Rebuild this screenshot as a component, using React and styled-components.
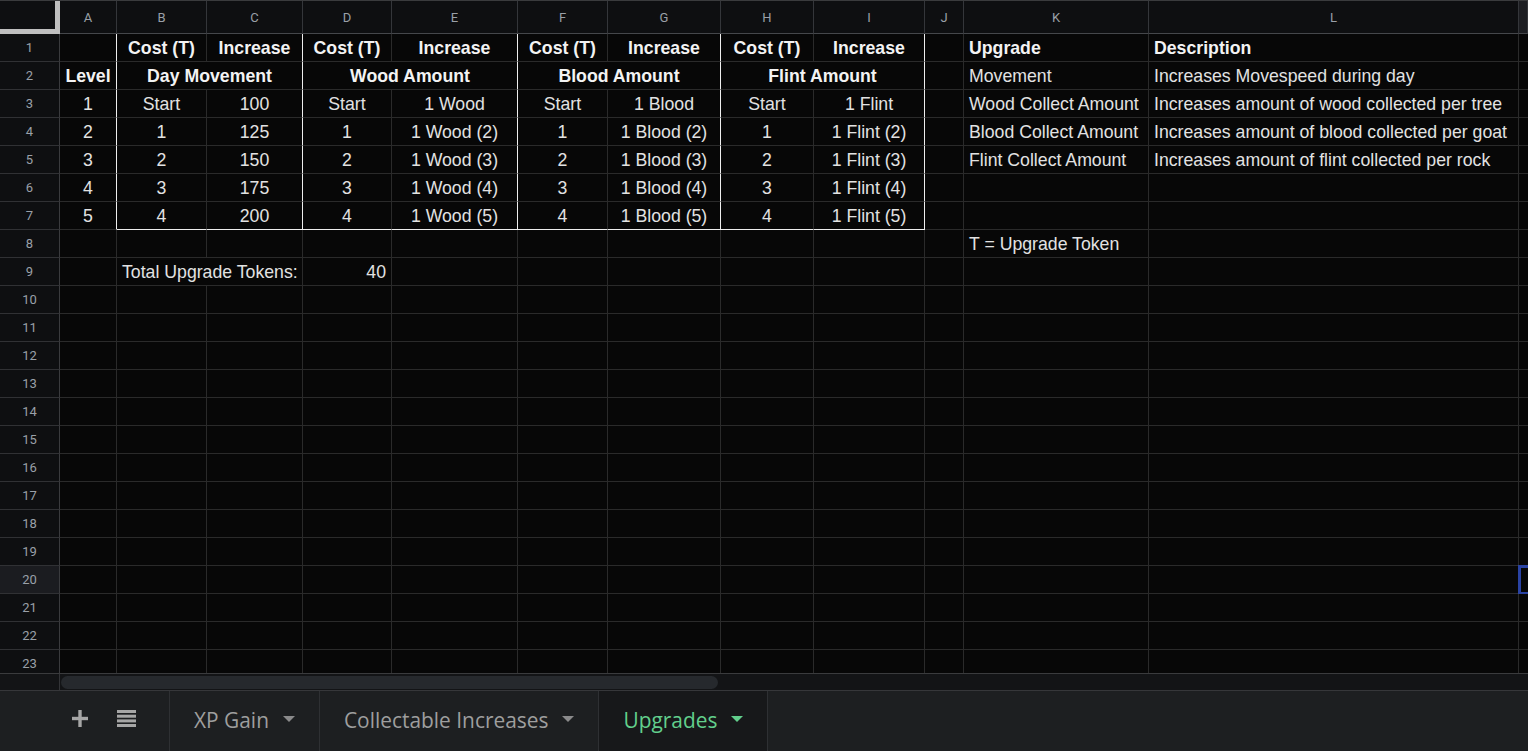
import React from "react";
import styled, { createGlobalStyle, css } from "styled-components";

const GlobalStyle = createGlobalStyle`
  html, body {
    margin: 0;
    padding: 0;
    background: #070707;
    overflow: hidden;
  }
  * {
    box-sizing: border-box;
  }
`;

const COLS =
  "60px 57px 90px 96px 89px 126px 90px 113px 93px 111px 39px 185px 370px 1fr";

const LETTERS = ["A", "B", "C", "D", "E", "F", "G", "H", "I", "J", "K", "L", "M"];
const BOXED_RIGHT = [0, 2, 4, 6, 8];
const ROW_COUNT = 23;
const SELECTED = { row: 20, col: 12 };

const Sheet = styled.div`
  display: flex;
  flex-direction: column;
  height: 100vh;
  width: 100vw;
  font-family: "Liberation Sans", Arial, sans-serif;
`;

const ColumnHeader = styled.div`
  display: grid;
  grid-template-columns: ${COLS};
  height: 34px;
  flex-shrink: 0;
  border-top: 1px solid #3a3b3d;
  background: #0e0f11;
`;

const Corner = styled.div`
  border-right: 5px solid #bfbfbf;
  border-bottom: 5px solid #bfbfbf;
  background: #0e0f11;
`;

const HeaderCell = styled.div`
  display: flex;
  align-items: center;
  justify-content: center;
  background: ${(p) => (p.$active ? "#1d1e22" : "#0e0f11")};
  border-right: 1px solid #34363a;
  border-bottom: 1px solid #45474b;
  color: #9aa0a8;
  font-family: Roboto, "Liberation Sans", sans-serif;
  font-size: 13px;
`;

const Body = styled.div`
  flex: 1;
  overflow: hidden;
  display: grid;
  grid-template-columns: ${COLS};
  grid-auto-rows: 28px;
  align-content: start;
`;

const RowHeader = styled.div`
  display: flex;
  align-items: center;
  justify-content: center;
  background: ${(p) => (p.$active ? "#1b1c20" : "#0e0f11")};
  border-right: 1px solid #3a3b3e;
  border-bottom: 1px solid #303134;
  color: #9aa0a8;
  font-family: Roboto, "Liberation Sans", sans-serif;
  font-size: 13px;
`;

const Cell = styled.div`
  grid-column: span ${(p) => p.$span};
  display: flex;
  align-items: center;
  justify-content: ${(p) =>
    p.$align === "left" ? "flex-start" : p.$align === "right" ? "flex-end" : "center"};
  padding: 1px 5px 0;
  background: #070707;
  border-right: 1px solid ${(p) => (p.$edgeRight ? "#ededed" : "#2a2a2a")};
  border-bottom: 1px solid ${(p) => (p.$edgeBottom ? "#ededed" : "#2a2a2a")};
  color: ${(p) => (p.$bold ? "#f3f3f3" : "#e2e2e2")};
  font-weight: ${(p) => (p.$bold ? 700 : 400)};
  font-size: 17.7px;
  white-space: nowrap;
  ${(p) =>
    p.$selected &&
    css`
      outline: 3px solid #2a43a3;
      outline-offset: -2px;
    `}
`;

const ScrollRow = styled.div`
  display: flex;
  height: 17px;
  flex-shrink: 0;
  border-top: 1px solid #3a3b3d;
  background: #131416;
`;

const ScrollCorner = styled.div`
  width: 60px;
  border-right: 1px solid #333437;
`;

const ScrollThumb = styled.div`
  margin: 2px 0 0 1px;
  width: 657px;
  height: 13px;
  border-radius: 7px;
  background: #26292d;
`;

const TabBar = styled.div`
  display: flex;
  height: 61px;
  flex-shrink: 0;
  border-top: 1px solid #36373a;
  background: #1d1f21;
`;

const Tools = styled.div`
  width: 170px;
  display: flex;
  align-items: center;
  gap: 29px;
  padding: 0 0 6px 72px;
  border-right: 1px solid #2e3033;
  color: #a6a6a6;
`;

const Tab = styled.div`
  display: flex;
  align-items: center;
  gap: 14px;
  padding: 0 24px 3px;
  border-right: 1px solid #2e3033;
  background: ${(p) => (p.$active ? "#17181a" : "transparent")};
  color: ${(p) => (p.$active ? "#62cf8c" : "#9e9e9e")};
  font-family: "Open Sans", "Liberation Sans", sans-serif;
  font-size: 20.9px;
`;

const Caret = styled.span`
  width: 0;
  height: 0;
  margin-top: -2px;
  border-left: 6px solid transparent;
  border-right: 6px solid transparent;
  border-top: 6px solid currentColor;
  opacity: ${(p) => (p.$active ? 1 : 0.85)};
`;

const mid = (t) => ({ t });
const bold = (t, span = 1) => ({ t, bold: true, span });
const left = (t, isBold = false) => ({ t, align: "left", bold: isBold });
const blank = () => ({ t: "" });

const DATA = {
  1: [blank(), bold("Cost (T)"), bold("Increase"), bold("Cost (T)"), bold("Increase"), bold("Cost (T)"), bold("Increase"), bold("Cost (T)"), bold("Increase"), blank(), left("Upgrade", true), left("Description", true)],
  2: [bold("Level"), bold("Day Movement", 2), bold("Wood Amount", 2), bold("Blood Amount", 2), bold("Flint Amount", 2), blank(), left("Movement"), left("Increases Movespeed during day")],
  3: [mid("1"), mid("Start"), mid("100"), mid("Start"), mid("1 Wood"), mid("Start"), mid("1 Blood"), mid("Start"), mid("1 Flint"), blank(), left("Wood Collect Amount"), left("Increases amount of wood collected per tree")],
  4: [mid("2"), mid("1"), mid("125"), mid("1"), mid("1 Wood (2)"), mid("1"), mid("1 Blood (2)"), mid("1"), mid("1 Flint (2)"), blank(), left("Blood Collect Amount"), left("Increases amount of blood collected per goat")],
  5: [mid("3"), mid("2"), mid("150"), mid("2"), mid("1 Wood (3)"), mid("2"), mid("1 Blood (3)"), mid("2"), mid("1 Flint (3)"), blank(), left("Flint Collect Amount"), left("Increases amount of flint collected per rock")],
  6: [mid("4"), mid("3"), mid("175"), mid("3"), mid("1 Wood (4)"), mid("3"), mid("1 Blood (4)"), mid("3"), mid("1 Flint (4)")],
  7: [mid("5"), mid("4"), mid("200"), mid("4"), mid("1 Wood (5)"), mid("4"), mid("1 Blood (5)"), mid("4"), mid("1 Flint (5)")],
  8: [blank(), blank(), blank(), blank(), blank(), blank(), blank(), blank(), blank(), blank(), left("T = Upgrade Token")],
  9: [blank(), { t: "Total Upgrade Tokens:", align: "left", span: 2 }, { t: "40", align: "right" }],
};

const TABS = [
  { name: "XP Gain" },
  { name: "Collectable Increases" },
  { name: "Upgrades", active: true },
];

const PlusIcon = () => (
  <svg width="16" height="17" viewBox="0 0 16 17">
    <rect x="6.3" y="0" width="3.4" height="17" fill="currentColor" />
    <rect x="0" y="6.8" width="16" height="3.4" fill="currentColor" />
  </svg>
);

const ListIcon = () => (
  <svg width="19" height="17" viewBox="0 0 19 17">
    {[0, 4.7, 9.4, 14].map((y) => (
      <rect key={y} x="0" y={y} width="19" height="3" fill="currentColor" />
    ))}
  </svg>
);

const renderRow = (r) => {
  const cells = DATA[r] || [];
  const out = [];
  let col = 0;
  let i = 0;
  while (col < LETTERS.length) {
    const cell = cells[i] || blank();
    const span = cell.span || 1;
    const lastCol = col + span - 1;
    out.push(
      <Cell
        key={`${r}-${col}`}
        $span={span}
        $align={cell.align}
        $bold={cell.bold}
        $edgeRight={r <= 7 && BOXED_RIGHT.includes(lastCol)}
        $edgeBottom={r === 7 && col >= 1 && col <= 8}
        $selected={r === SELECTED.row && col === SELECTED.col}
      >
        {cell.t}
      </Cell>
    );
    col += span;
    i += 1;
  }
  return out;
};

const App = () => {
  const rowNumbers = Array.from({ length: ROW_COUNT }, (_, i) => i + 1);

  return (
    <>
      <GlobalStyle />
      <Sheet>
        <ColumnHeader>
          <Corner />
          {LETTERS.map((letter, idx) => (
            <HeaderCell key={letter} $active={idx === SELECTED.col}>
              {letter === "M" ? "" : letter}
            </HeaderCell>
          ))}
        </ColumnHeader>

        <Body>
          {rowNumbers.map((r) => (
            <React.Fragment key={r}>
              <RowHeader $active={r === SELECTED.row}>{r}</RowHeader>
              {renderRow(r)}
            </React.Fragment>
          ))}
        </Body>

        <ScrollRow>
          <ScrollCorner />
          <ScrollThumb />
        </ScrollRow>

        <TabBar>
          <Tools>
            <PlusIcon />
            <ListIcon />
          </Tools>
          {TABS.map((tab) => (
            <Tab key={tab.name} $active={tab.active}>
              {tab.name}
              <Caret $active={tab.active} />
            </Tab>
          ))}
        </TabBar>
      </Sheet>
    </>
  );
};

export default App;
